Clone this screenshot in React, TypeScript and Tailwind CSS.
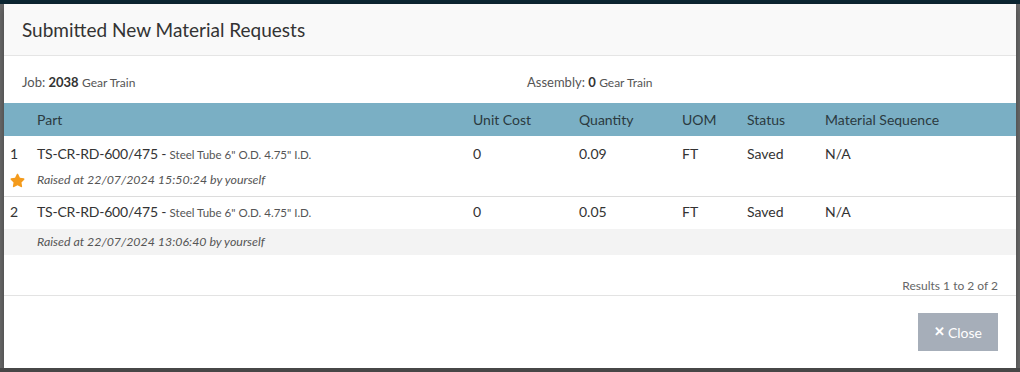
import { FaStar } from "react-icons/fa"

const cols = "grid grid-cols-[27px_436px_106px_103px_65px_78px_1fr]"

const rows = [
  { n: 1, code: "TS-CR-RD-600/475", desc: 'Steel Tube 6" O.D. 4.75" I.D.', cost: "0", qty: "0.09", uom: "FT", status: "Saved", seq: "N/A", raised: "Raised at 22/07/2024 15:50:24 by yourself", star: true },
  { n: 2, code: "TS-CR-RD-600/475", desc: 'Steel Tube 6" O.D. 4.75" I.D.', cost: "0", qty: "0.05", uom: "FT", status: "Saved", seq: "N/A", raised: "Raised at 22/07/2024 13:06:40 by yourself", star: false },
]

export default function App() {
  return (
    <div
      className="w-[1020px] h-[372px] bg-[#6b6b6b] flex flex-col overflow-hidden"
      style={{ fontFamily: "Lato, 'Liberation Sans', sans-serif" }}
    >
      <div className="h-[4px] bg-[#0c2733] shrink-0" />
      <div className="flex-1 flex flex-col">
        <div className="mx-[4px] w-[1012px] h-[364px] bg-white flex flex-col text-[#333] shadow-[0_3px_8px_rgba(0,0,0,0.4)]">
          <div className="h-[52px] bg-[#f9f9f9] border-b border-[#e5e5e5] flex items-center px-[18px] shrink-0">
            <h1 className="text-[19px] text-[#333] font-normal leading-none">Submitted New Material Requests</h1>
          </div>

          <div className="flex items-center h-[47px] pt-[6px] px-[18px] text-[13px] text-[#555]">
            <div className="w-[505px]">
              Job: <span className="font-bold text-[#333]">2038</span>{" "}
              <span className="text-[12px]">Gear Train</span>
            </div>
            <div>
              Assembly: <span className="font-bold text-[#333]">0</span>{" "}
              <span className="text-[12px]">Gear Train</span>
            </div>
          </div>

          <div className={`${cols} h-[33px] items-center bg-[#7aafc4] text-[14px] text-[#2b3a40]`}>
            <div className="px-[6px]" />
            <div className="px-[6px]">Part</div>
            <div className="px-[6px]">Unit Cost</div>
            <div className="px-[6px]">Quantity</div>
            <div className="px-[6px]">UOM</div>
            <div className="px-[6px]">Status</div>
            <div className="px-[6px]">Material Sequence</div>
          </div>

          {rows.map((r) => (
            <div key={r.n} className={r.star ? "" : "border-t border-[#dcdcdc]"}>
              <div className={`${cols} text-[14px] leading-[20px] ${r.star ? "pt-[8px]" : "pt-[5px] pb-[6px]"}`}>
                <div className="px-[6px]">{r.n}</div>
                <div className="px-[6px] tracking-[-0.2px]">
                  {r.code} - <span className="text-[11.5px] text-[#555] tracking-normal">{r.desc}</span>
                </div>
                <div className="px-[6px]">{r.cost}</div>
                <div className="px-[6px]">{r.qty}</div>
                <div className="px-[6px]">{r.uom}</div>
                <div className="px-[6px]">{r.status}</div>
                <div className="px-[6px]">{r.seq}</div>
              </div>
              <div
                className={`${cols} items-center text-[12.4px] italic text-[#555] ${
                  r.star ? "pt-[5px] pb-[6px]" : "h-[26px] bg-[#f3f3f3]"
                }`}
              >
                <div className="px-[6px] flex items-center">
                  {r.star && <FaStar className="text-[17px] text-[#f49b1c]" />}
                </div>
                <div className="px-[6px] col-span-6 leading-[20px]">{r.raised}</div>
              </div>
            </div>
          ))}

          <div className="h-[41px] flex justify-end items-end px-[18px] pb-[1px] text-[12px] leading-[16px] text-[#666] border-b border-[#e3e3e3]">
            Results 1 to 2 of 2
          </div>

          <div className="flex-1 flex justify-end items-center px-[18px]">
            <button className="w-[80px] h-[38px] bg-[#a6aeb9] text-white text-[14px] flex items-center justify-center gap-[3px]">
              <span className="font-bold text-[13px]">✕</span>Close
            </button>
          </div>
        </div>
        <div className="flex-1 bg-[#474747]" />
      </div>
    </div>
  )
}
